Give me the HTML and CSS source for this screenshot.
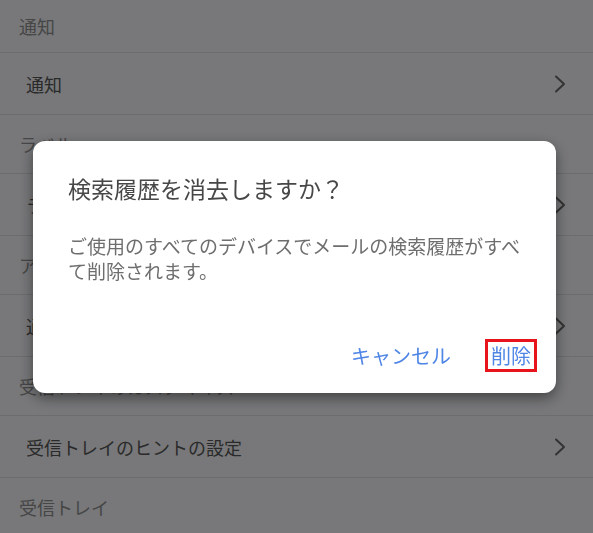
FILE: index.html
```html
<!DOCTYPE html>
<html lang="ja">
<head>
<meta charset="utf-8">
<title>設定</title>
<link rel="stylesheet" href="styles.css">
</head>
<body>
<div class="settings">
  <div class="section-header first">通知</div>
  <div class="row"><span>通知</span><svg class="chev" viewBox="0 0 12 18"><path d="M2 1.5 L10 9 L2 16.5"/></svg></div>
  <div class="section-header">ラベル</div>
  <div class="row"><span>ラベル</span><svg class="chev" viewBox="0 0 12 18"><path d="M2 1.5 L10 9 L2 16.5"/></svg></div>
  <div class="section-header">アプリ</div>
  <div class="row"><span>通知音</span><svg class="chev" viewBox="0 0 12 18"><path d="M2 1.5 L10 9 L2 16.5"/></svg></div>
  <div class="section-header">受信トレイのカスタマイズ</div>
  <div class="row"><span>受信トレイのヒントの設定</span><svg class="chev" viewBox="0 0 12 18"><path d="M2 1.5 L10 9 L2 16.5"/></svg></div>
  <div class="section-header">受信トレイ</div>
</div>
<div class="overlay">
  <div class="dialog">
    <div class="dialog-title">検索履歴を消去しますか？</div>
    <div class="dialog-body">ご使用のすべてのデバイスでメールの検索履歴がすべて削除されます。</div>
    <div class="dialog-actions">
      <span class="btn">キャンセル</span>
      <span class="btn btn-delete">削除</span>
    </div>
  </div>
</div>
</body>
</html>
```
FILE: styles.css
```css
html, body {
  margin: 0;
  padding: 0;
  height: 100%;
  overflow: hidden;
}
body {
  font-family: "Noto Sans CJK JP", "Noto Sans", sans-serif;
  background: #f0f1f4;
}
.settings {
  display: flex;
  flex-direction: column;
}
.section-header {
  height: 58px;
  border-bottom: 1px solid #d8d9dc;
  display: flex;
  align-items: center;
  padding-left: 19px;
  font-size: 18px;
  color: #8c8c8c;
}
.section-header.first {
  height: 52px;
}
.row {
  height: 61px;
  border-bottom: 1px solid #d8d9dc;
  display: flex;
  align-items: center;
  justify-content: space-between;
  padding-left: 26px;
  padding-right: 27px;
  font-size: 18px;
  color: #555;
}
.chev {
  width: 12px;
  height: 18px;
  fill: none;
  stroke: #666;
  stroke-width: 2;
  stroke-linecap: round;
  stroke-linejoin: round;
}
.overlay {
  position: fixed;
  inset: 0;
  background: rgba(0, 0, 0, 0.5);
}
.dialog {
  position: absolute;
  left: 33px;
  top: 141px;
  width: 523px;
  height: 252px;
  box-sizing: border-box;
  background: #fff;
  border-radius: 12px;
  box-shadow: 0 5px 14px rgba(0, 0, 0, 0.45);
  padding: 32px 30px 21px 35px;
  display: flex;
  flex-direction: column;
}
.dialog-title {
  font-size: 23px;
  line-height: 30px;
  color: #474747;
}
.dialog-body {
  margin-top: 30px;
  font-size: 19px;
  line-height: 25px;
  color: #6e6e6e;
}
.dialog-actions {
  margin-top: auto;
  margin-right: -11px;
  display: flex;
  justify-content: flex-end;
  align-items: center;
  gap: 34px;
}
.btn {
  font-size: 20px;
  line-height: 27px;
  color: #4f86e6;
}
.btn-delete {
  border: 3px solid #e8141c;
  padding: 0 3px;
}
```
